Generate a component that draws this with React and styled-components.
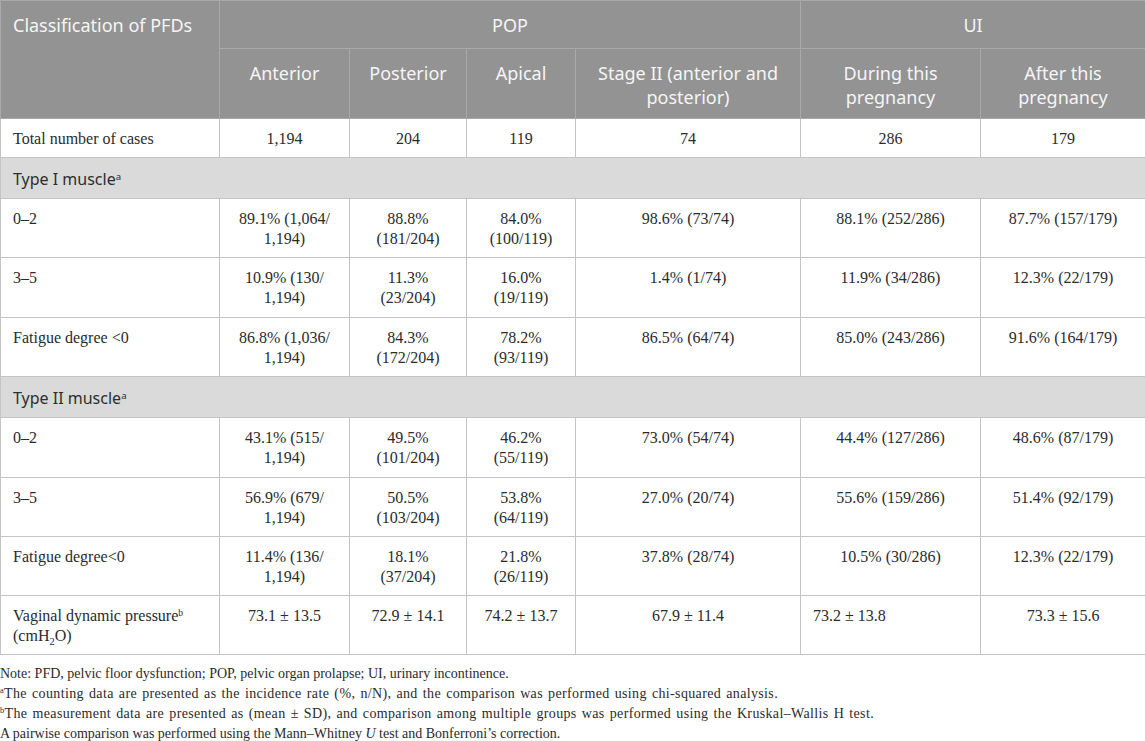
import React from "react"
import styled, { createGlobalStyle } from "styled-components"

const GlobalStyle = createGlobalStyle`
  html, body {
    margin: 0;
    padding: 0;
    background: #ffffff;
  }
`

const Page = styled.div`
  width: 1145px;
  font-family: "Liberation Serif", "Times New Roman", serif;
  color: #2b2b2b;
`

const Table = styled.table`
  width: 1145px;
  table-layout: fixed;
  border-collapse: collapse;
  border: 1px solid #c4c4c4;
`

const HeadCell = styled.th`
  background: #939393;
  color: #f5f5f5;
  font-family: "Noto Sans", "Open Sans", sans-serif;
  font-weight: 400;
  font-size: 18px;
  line-height: 24px;
  text-align: ${(p) => (p.$left ? "left" : "center")};
  vertical-align: top;
  padding: 12px 12px 4px;
  border: 1px solid #a9a9a9;
`

const HeadRow = styled.tr`
  height: ${(p) => p.$h}px;
`

const Row = styled.tr`
  height: ${(p) => p.$h || 59}px;
`

const Cell = styled.td`
  font-size: 16px;
  line-height: 20px;
  text-align: ${(p) => p.$align || "center"};
  vertical-align: top;
  padding: 10px 12px 4px;
  border: 1px solid #c4c4c4;
`

const Section = styled.td`
  background: #d9dad9;
  color: #2e2e2e;
  font-family: "Noto Sans", "Open Sans", sans-serif;
  font-size: 16px;
  line-height: 24px;
  vertical-align: top;
  padding: 9px 12px 4px;
  border: 1px solid #c4c4c4;
`

const Sup = styled.sup`
  font-size: 0.6em;
  line-height: 0;
  vertical-align: 0.55em;
`

const Sub = styled.sub`
  font-size: 0.65em;
  line-height: 0;
`

const Notes = styled.div`
  margin-top: 9px;
  font-size: 14px;
  line-height: 20px;
`

const Note = styled.div`
  white-space: nowrap;
  letter-spacing: ${(p) => (p.$wide ? "0.35px" : "0")};
  word-spacing: ${(p) => (p.$wide ? "1.3px" : "0")};
`

const cols = [219, 130, 117, 109, 225, 180, 165]

const typeOne = [
  ["0–2", "89.1% (1,064/ 1,194)", "88.8% (181/204)", "84.0% (100/119)", "98.6% (73/74)", "88.1% (252/286)", "87.7% (157/179)"],
  ["3–5", "10.9% (130/ 1,194)", "11.3% (23/204)", "16.0% (19/119)", "1.4% (1/74)", "11.9% (34/286)", "12.3% (22/179)"],
  ["Fatigue degree <0", "86.8% (1,036/ 1,194)", "84.3% (172/204)", "78.2% (93/119)", "86.5% (64/74)", "85.0% (243/286)", "91.6% (164/179)"],
]

const typeTwo = [
  ["0–2", "43.1% (515/ 1,194)", "49.5% (101/204)", "46.2% (55/119)", "73.0% (54/74)", "44.4% (127/286)", "48.6% (87/179)"],
  ["3–5", "56.9% (679/ 1,194)", "50.5% (103/204)", "53.8% (64/119)", "27.0% (20/74)", "55.6% (159/286)", "51.4% (92/179)"],
  ["Fatigue degree<0", "11.4% (136/ 1,194)", "18.1% (37/204)", "21.8% (26/119)", "37.8% (28/74)", "10.5% (30/286)", "12.3% (22/179)"],
]

const DataRow = ({ cells, h }) => (
  <Row $h={h}>
    {cells.map((c, i) => (
      <Cell key={i} $align={i === 0 ? "left" : "center"}>
        {c}
      </Cell>
    ))}
  </Row>
)

const App = () => {
  return (
    <Page>
      <GlobalStyle />
      <Table>
        <colgroup>
          {cols.map((w, i) => (
            <col key={i} style={{ width: w }} />
          ))}
        </colgroup>
        <thead>
          <HeadRow $h={48}>
            <HeadCell rowSpan={2} $left>
              Classification of PFDs
            </HeadCell>
            <HeadCell colSpan={4}>POP</HeadCell>
            <HeadCell colSpan={2}>UI</HeadCell>
          </HeadRow>
          <HeadRow $h={70}>
            <HeadCell>Anterior</HeadCell>
            <HeadCell>Posterior</HeadCell>
            <HeadCell>Apical</HeadCell>
            <HeadCell>Stage II (anterior and posterior)</HeadCell>
            <HeadCell>During this pregnancy</HeadCell>
            <HeadCell>After this pregnancy</HeadCell>
          </HeadRow>
        </thead>
        <tbody>
          <Row $h={39}>
            <Cell $align="left">Total number of cases</Cell>
            <Cell>1,194</Cell>
            <Cell>204</Cell>
            <Cell>119</Cell>
            <Cell>74</Cell>
            <Cell>286</Cell>
            <Cell>179</Cell>
          </Row>
          <Row $h={41}>
            <Section colSpan={7}>
              Type I muscle<Sup>a</Sup>
            </Section>
          </Row>
          {typeOne.map((r, i) => (
            <DataRow key={i} cells={r} h={i === 1 ? 60 : 59} />
          ))}
          <Row $h={41}>
            <Section colSpan={7}>
              Type II muscle<Sup>a</Sup>
            </Section>
          </Row>
          {typeTwo.map((r, i) => (
            <DataRow key={i} cells={r} h={i === 0 ? 60 : 59} />
          ))}
          <Row>
            <Cell $align="left">
              Vaginal dynamic pressure<Sup>b</Sup> (cmH<Sub>2</Sub>O)
            </Cell>
            <Cell>73.1 ± 13.5</Cell>
            <Cell>72.9 ± 14.1</Cell>
            <Cell>74.2 ± 13.7</Cell>
            <Cell>67.9 ± 11.4</Cell>
            <Cell $align="left">73.2 ± 13.8</Cell>
            <Cell>73.3 ± 15.6</Cell>
          </Row>
        </tbody>
      </Table>
      <Notes>
        <Note>Note: PFD, pelvic floor dysfunction; POP, pelvic organ prolapse; UI, urinary incontinence.</Note>
        <Note $wide>
          <Sup>a</Sup>The counting data are presented as the incidence rate (%, n/N), and the comparison was performed using chi-squared analysis.
        </Note>
        <Note $wide>
          <Sup>b</Sup>The measurement data are presented as (mean ± SD), and comparison among multiple groups was performed using the Kruskal–Wallis H test.
        </Note>
        <Note>
          A pairwise comparison was performed using the Mann–Whitney <i>U</i> test and Bonferroni’s correction.
        </Note>
      </Notes>
    </Page>
  )
}

export default App
